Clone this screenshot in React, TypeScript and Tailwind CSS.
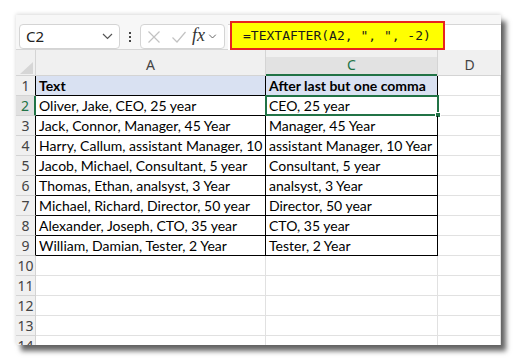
import React from "react";

const rows: [string, string][] = [
  ["Text", "After last but one comma"],
  ["Oliver, Jake, CEO, 25 year", "CEO, 25 year"],
  ["Jack, Connor, Manager, 45 Year", "Manager, 45 Year"],
  ["Harry, Callum, assistant Manager, 10 Year", "assistant Manager, 10 Year"],
  ["Jacob, Michael, Consultant, 5 year", "Consultant, 5 year"],
  ["Thomas, Ethan, analsyst, 3 Year", "analsyst, 3 Year"],
  ["Michael, Richard, Director, 50 year", "Director, 50 year"],
  ["Alexander, Joseph, CTO, 35 year", "CTO, 35 year"],
  ["William, Damian, Tester, 2 Year", "Tester, 2 Year"],
];

const cellFont = { fontFamily: "Lato, 'Open Sans', sans-serif" };
const uiFont = { fontFamily: "'Noto Sans', sans-serif" };

function Chevron({ className = "" }: { className?: string }) {
  return (
    <svg width="11" height="7" viewBox="0 0 11 7" className={className}>
      <path d="M1 1l4.5 4.5L10 1" fill="none" stroke="#555" strokeWidth="1.2" />
    </svg>
  );
}

export default function App() {
  const rowNums = Array.from({ length: 14 }, (_, i) => i + 1);
  return (
    <div className="w-[518px] h-[362px] bg-white overflow-hidden">
      <div className="ml-[16px] mt-[15px] w-[485px] h-[330px] bg-white overflow-hidden shadow-[5px_6px_5px_rgba(0,0,0,0.6),0_-1px_4px_rgba(0,0,0,0.15)]">
        {/* formula bar */}
        <div className="h-[35px] bg-[#f7f7f7] flex items-start relative border-b border-[#d6d6d6]">
          <div className="ml-[3px] mt-[9px] w-[101px] h-[25px] bg-white border border-[#d4d4d4] rounded-[4px] flex items-center justify-between pl-[6px] pr-[6px]">
            <span className="text-[15px] text-[#222]" style={uiFont}>C2</span>
            <Chevron />
          </div>
          <div className="ml-[9px] mt-[17px] flex flex-col gap-[2px]">
            <div className="w-[2px] h-[2px] bg-[#444]" />
            <div className="w-[2px] h-[2px] bg-[#444]" />
            <div className="w-[2px] h-[2px] bg-[#444]" />
          </div>
          <div className="ml-[9px] mt-[9px] w-[85px] h-[25px] bg-white border border-[#d4d4d4] rounded-[4px] flex items-center pl-[6px]">
            <svg width="14" height="14" viewBox="0 0 14 14">
              <path d="M1.5 1.5l11 11M12.5 1.5l-11 11" stroke="#c2c2c2" strokeWidth="1.2" />
            </svg>
            <svg width="16" height="14" viewBox="0 0 16 14" className="ml-[10px]">
              <path d="M1.5 7.5l4.5 4.5L14.5 2" fill="none" stroke="#c2c2c2" strokeWidth="1.2" />
            </svg>
            <span className="ml-[5px] italic text-[18px] leading-none text-[#333] -mt-[3px]" style={{ fontFamily: "'Liberation Serif', serif" }}>fx</span>
            <Chevron className="ml-[2px] scale-75" />
          </div>
          <div className="ml-[3px] mt-[9px] flex-1 h-[26px] bg-white border-t border-[#d6d6d6]" />
          <div className="absolute left-[214px] top-[6px] w-[215px] h-[29px] bg-[#ffff00] border-2 border-[#e8231f] flex items-center pl-[11px]">
            <span className="text-[13px] text-[#1a1a1a] whitespace-pre" style={{ fontFamily: "'DejaVu Sans Mono', monospace" }}>
              =TEXTAFTER(A2, ", ", -2)
            </span>
          </div>
        </div>

        {/* sheet */}
        <div className="grid grid-cols-[20px_230px_172px_63px]" style={{ gridAutoRows: "20px", gridTemplateRows: "26px" }}>
          {/* header row */}
          <div className="bg-[#f0f0f0] border-b border-r border-[#d4d4d4] relative">
            <svg width="13" height="12" viewBox="0 0 13 12" className="absolute left-[4px] top-[12px]">
              <path d="M13 0V12H0Z" fill="#d6d6d6" />
            </svg>
          </div>
          <div className="bg-[#f0f0f0] border-b border-r border-[#d4d4d4] flex items-end justify-center pb-[0px] text-[14px] leading-[20px] text-[#444]" style={uiFont}>A</div>
          <div className="bg-[#f0f0f0] relative border-r border-[#d4d4d4]">
            <div className="absolute inset-x-0 top-[7px] bottom-0 bg-[#e2e2e2] border-b-2 border-[#217346] flex items-end justify-center text-[14px] leading-[18px] text-[#217346]" style={uiFont}>C</div>
          </div>
          <div className="bg-[#f0f0f0] border-b border-[#d4d4d4] flex items-end justify-center text-[14px] leading-[20px] text-[#444]" style={uiFont}>D</div>

          {rowNums.map((n) => {
            const data = rows[n - 1];
            const inTable = !!data;
            const selectedRow = n === 2;
            return (
              <React.Fragment key={n}>
                <div
                  className={`border-b border-[#d4d4d4] flex items-center justify-center text-[14px] ${
                    selectedRow ? "bg-[#e1e1e1] text-[#217346] border-r-2 border-r-[#217346]" : "bg-[#f0f0f0] text-[#444] border-r"
                  } ${inTable && !selectedRow ? "border-r-black" : ""}`}
                  style={uiFont}
                >
                  {n}
                </div>
                <div
                  className={`overflow-hidden whitespace-nowrap pl-[3px] text-[14px] leading-[19px] text-black border-r border-b ${
                    inTable ? "border-black" : "border-[#e1e1e1]"
                  } ${n === 1 ? "bg-[#d9e1f2] font-bold" : ""}`}
                  style={cellFont}
                >
                  {data ? data[0] : ""}
                </div>
                <div
                  className={`relative whitespace-nowrap text-[14px] leading-[19px] text-black border-r border-b ${
                    inTable ? "border-black" : "border-[#e1e1e1]"
                  } ${n === 1 ? "bg-[#d9e1f2] font-bold" : ""}`}
                  style={cellFont}
                >
                  <div className="overflow-hidden pl-[3px] h-full">{data ? data[1] : ""}</div>
                  {selectedRow && (
                    <div className="absolute -left-[1px] -top-[1px] w-[174px] h-[21px] border-2 border-[#217346]">
                      <div className="absolute -right-[4px] -bottom-[4px] w-[6px] h-[6px] bg-[#217346] border border-white" />
                    </div>
                  )}
                </div>
                <div className="border-b border-r border-[#e1e1e1]" />
              </React.Fragment>
            );
          })}
        </div>
      </div>
    </div>
  );
}
